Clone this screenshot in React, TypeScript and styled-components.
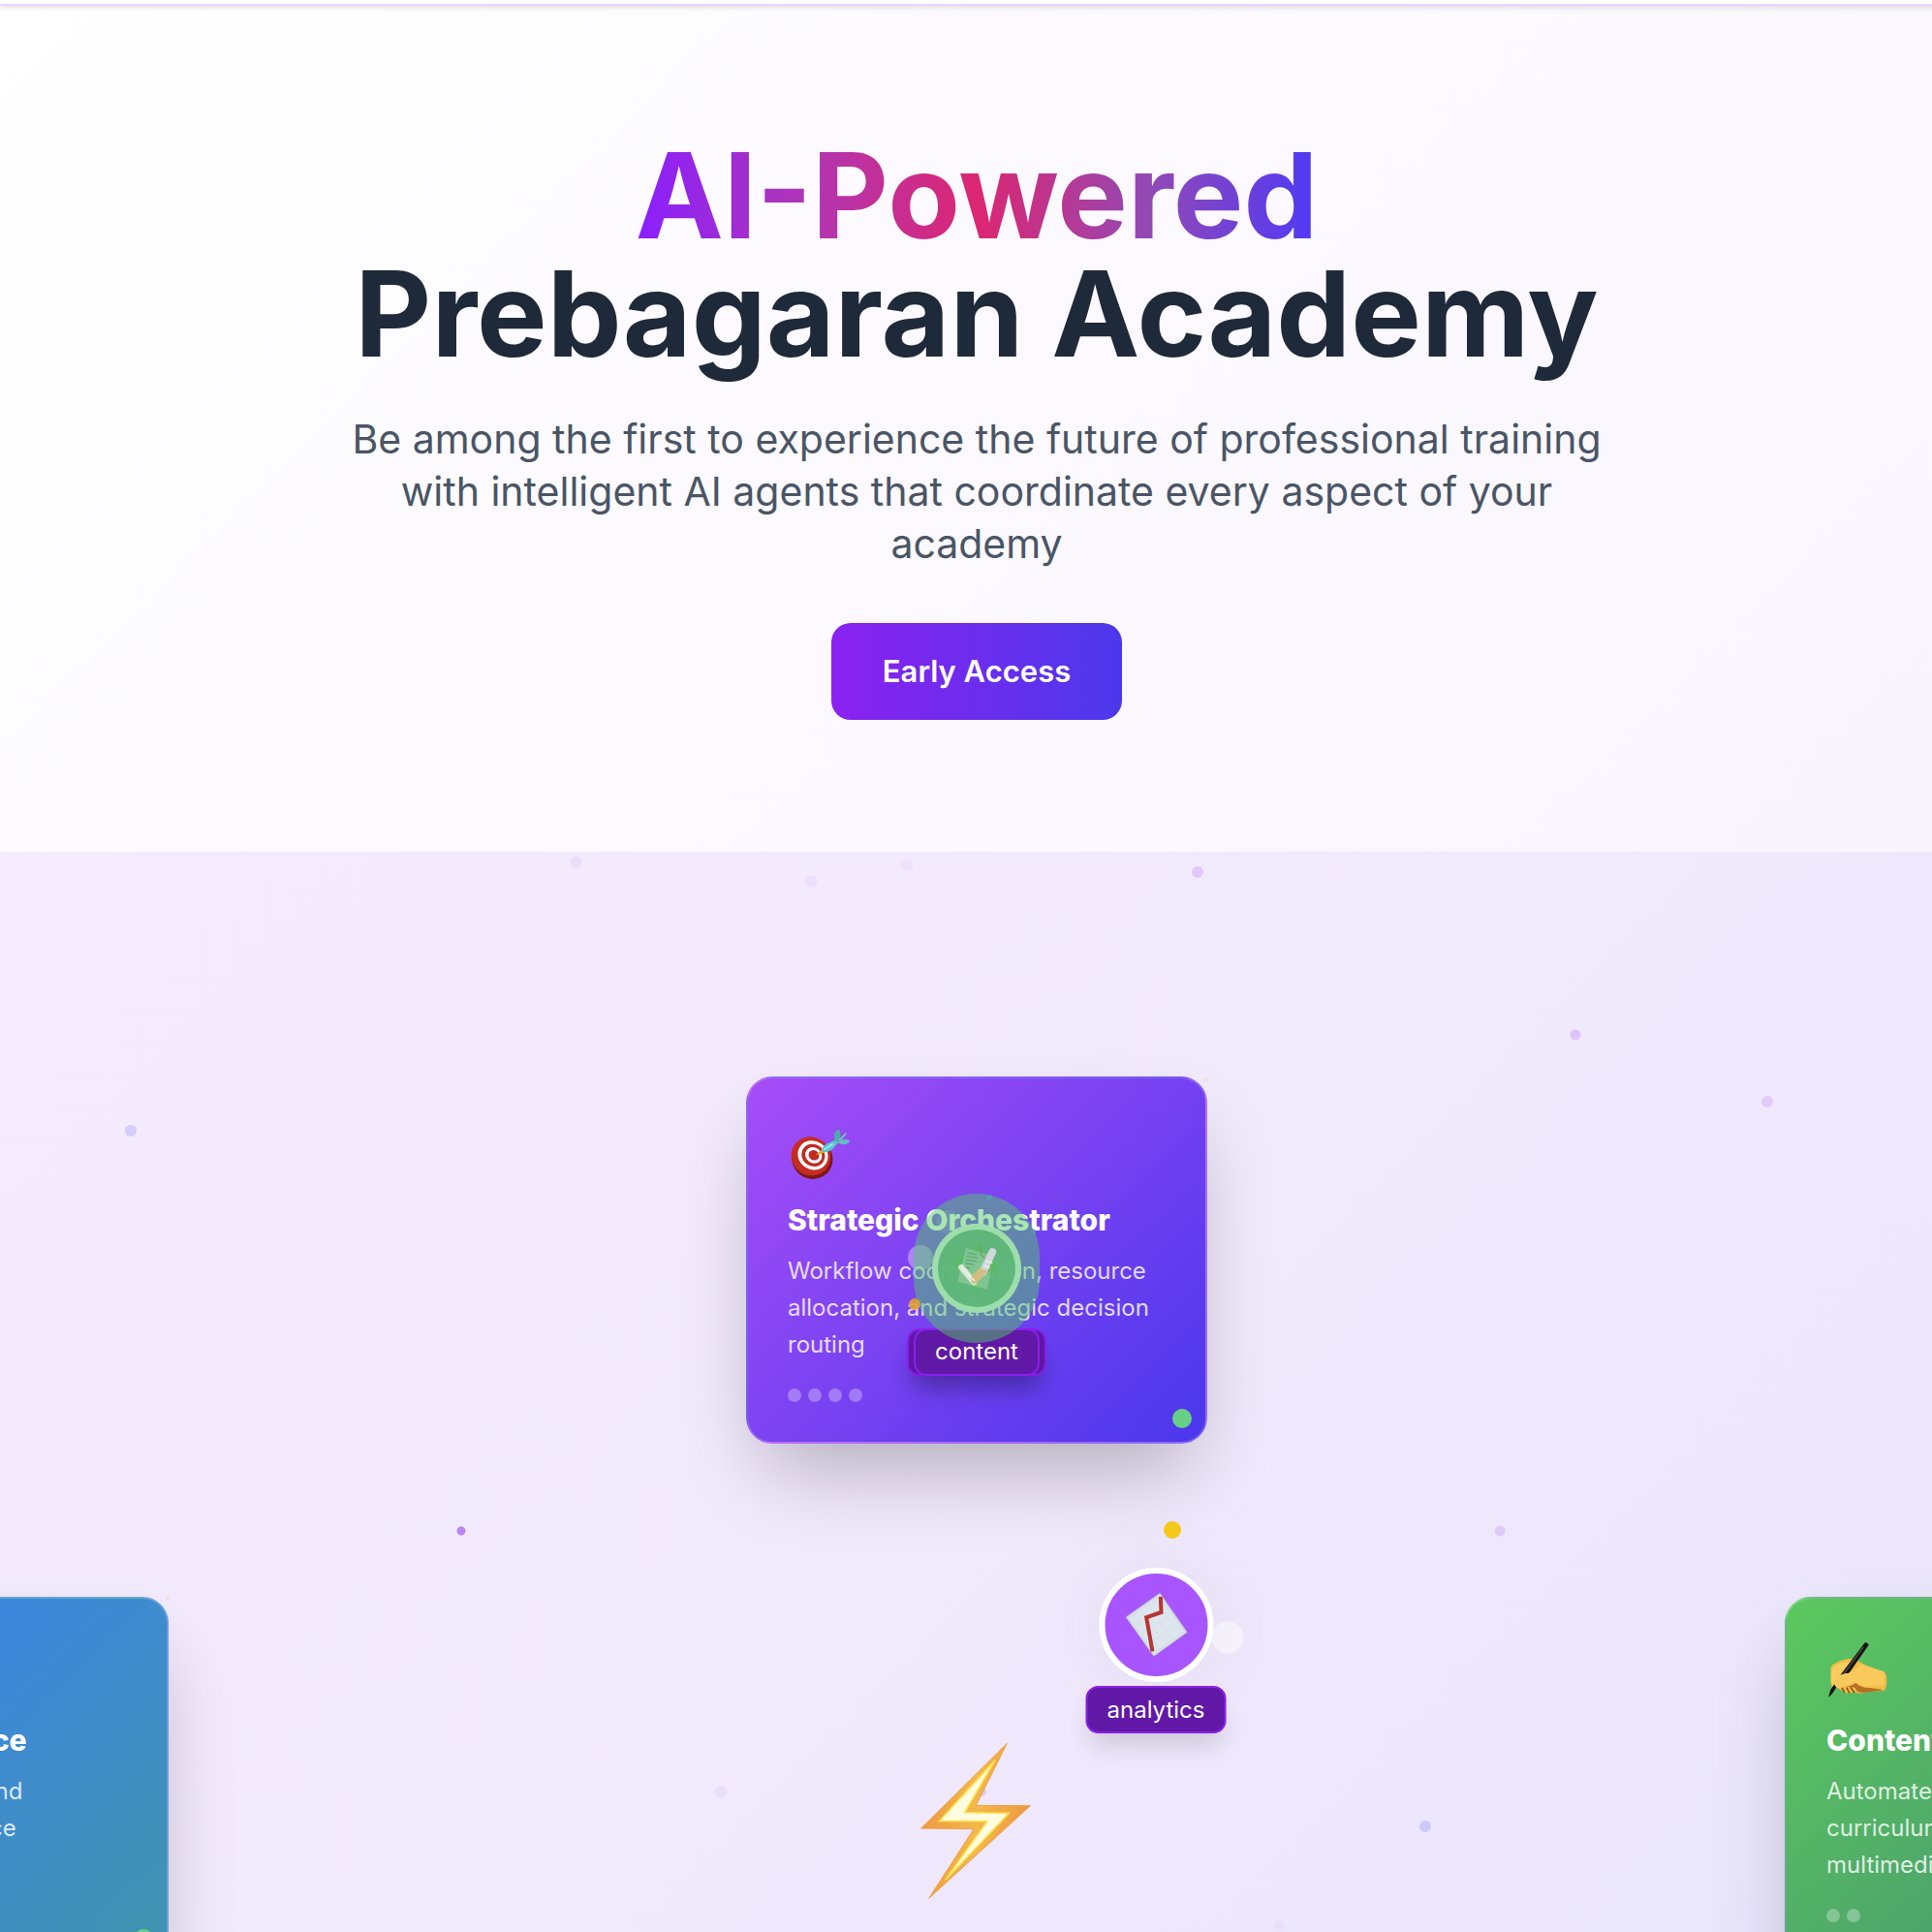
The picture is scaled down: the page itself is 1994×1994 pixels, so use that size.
import React from "react";
import styled, { createGlobalStyle } from "styled-components";

const GlobalStyle = createGlobalStyle`
  * { box-sizing: border-box; }
  body {
    margin: 0;
    overflow-x: hidden;
    background: #ffffff;
    font-family: Inter, "Liberation Sans", sans-serif;
  }
  h1, h2, p, ul { margin: 0; padding: 0; }
`;

const Page = styled.div`
  width: calc(100% + 22px);
  overflow: hidden;
`;

const TopBar = styled.header`
  position: relative;
  height: 6px;
  background: #ffffff;
  border-bottom: 2px solid #e9d5ff;
  box-shadow: 0 2px 5px rgba(0, 0, 0, 0.12);
`;

const Hero = styled.section`
  display: flex;
  flex-direction: column;
  align-items: center;
  padding: 135px 40px 136px;
  text-align: center;
  background: linear-gradient(135deg, #ffffff 0%, #fcfaff 40%, #f9f5ff 100%);
`;

const Headline = styled.h1`
  display: flex;
  flex-direction: column;
  align-items: center;
  font-size: 122px;
  line-height: 122px;
  font-weight: 700;
  color: #1e2939;
`;

const Accent = styled.span`
  background: linear-gradient(90deg, #8a1fff, #b036b4 25%, #dc2672 50%, #9349b4 75%, #4f39f6);
  background-clip: text;
  -webkit-background-clip: text;
  color: transparent;
`;

const Lead = styled.p`
  max-width: 1306px;
  margin-top: 41px;
  font-size: 41px;
  line-height: 54px;
  color: #4a5565;
`;

const EarlyButton = styled.button`
  margin-top: 55px;
  height: 100px;
  padding: 0 53px;
  border: 0;
  border-radius: 20px;
  background: linear-gradient(90deg, #8b21f0, #4c38ec);
  color: #ffffff;
  font: 600 31px/48px Inter, "Liberation Sans", sans-serif;
  cursor: pointer;
`;

const Canvas = styled.section`
  position: relative;
  height: 1115px;
  overflow: hidden;
  background: linear-gradient(135deg, #f4ebfe 0%, #f1e9fc 55%, #e8e5fc 100%);
`;

const Particle = styled.i<{ $x: number; $y: number; $size: number; $color: string }>`
  position: absolute;
  left: calc(50% + ${(p) => p.$x}px);
  top: ${(p) => p.$y}px;
  width: ${(p) => p.$size}px;
  height: ${(p) => p.$size}px;
  border-radius: 50%;
  transform: translate(-50%, -50%);
  background: ${(p) => p.$color};
`;

const Card = styled.article<{ $x: number; $y: number; $from: string; $to: string }>`
  position: absolute;
  left: calc(50% + ${(p) => p.$x}px);
  top: ${(p) => p.$y}px;
  width: 476px;
  min-height: 379px;
  margin-left: -238px;
  padding: 41px;
  border: 2px solid rgba(255, 255, 255, 0.2);
  border-radius: 27px;
  background: linear-gradient(135deg, ${(p) => p.$from}, ${(p) => p.$to});
  box-shadow: 0 42px 85px -20px rgba(0, 0, 0, 0.28);
  color: #ffffff;
`;

const CardIcon = styled.div`
  display: flex;
  align-items: center;
  height: 68px;
  margin-bottom: 13px;
`;

const CardTitle = styled.h2`
  font-size: 30px;
  line-height: 48px;
  font-weight: 800;
  white-space: nowrap;
`;

const CardText = styled.p`
  margin-top: 10px;
  font-size: 24px;
  line-height: 38px;
  color: rgba(255, 255, 255, 0.82);
`;

const DotRow = styled.div`
  display: flex;
  gap: 7px;
  margin-top: 26px;
`;

const Dot = styled.i`
  width: 14px;
  height: 14px;
  border-radius: 50%;
  background: rgba(255, 255, 255, 0.3);
`;

const Status = styled.i`
  position: absolute;
  right: 14px;
  bottom: 14px;
  width: 20px;
  height: 20px;
  border-radius: 50%;
  background: #66d184;
`;

const Token = styled.div<{ $x: number; $y: number }>`
  position: absolute;
  left: calc(50% + ${(p) => p.$x}px);
  top: ${(p) => p.$y}px;
  transform: translateX(-50%);
  display: flex;
  flex-direction: column;
  align-items: center;
`;

const Badge = styled.div`
  display: flex;
  align-items: center;
  justify-content: center;
  width: 118px;
  height: 118px;
  border: 6px solid #ffffff;
  border-radius: 50%;
  background: #a855ff;
  box-shadow: 0 0 85px rgba(0, 0, 0, 0.06);
`;

const Tag = styled.span<{ $width: number }>`
  display: flex;
  align-items: center;
  justify-content: center;
  width: ${(p) => p.$width}px;
  height: 49px;
  margin-top: 4px;
  border: 2px solid #8b1fee;
  border-radius: 13px;
  background: #6118a6;
  color: #ffffff;
  font-size: 24px;
  line-height: 34px;
  font-weight: 400;
  box-shadow: 0 17px 25px -5px rgba(0, 0, 0, 0.14);
`;

const TagStack = styled.div`
  position: absolute;
  left: calc(50% - 72px);
  top: 492px;
  width: 144px;
  height: 49px;
  display: flex;
  justify-content: center;
  border: 2px solid #8b1fee;
  border-radius: 13px;
  background: #6118a6;
  box-shadow: 0 17px 25px -5px rgba(0, 0, 0, 0.2);

  ${Tag} {
    margin-top: -2px;
    flex: none;
  }
`;

const Halo = styled.div`
  position: absolute;
  left: calc(50% - 65px);
  top: 353px;
  width: 130px;
  height: 154px;
  border-radius: 65px;
  background: rgba(80, 203, 102, 0.49);
`;

const RingBadge = styled.div`
  position: absolute;
  left: calc(50% - 46px);
  top: 384px;
  width: 92px;
  height: 92px;
  display: flex;
  align-items: center;
  justify-content: center;
  border: 6px solid rgba(168, 229, 180, 0.85);
  border-radius: 50%;
  background: rgba(94, 184, 120, 0.95);
`;

const TagText = styled.span`
  position: absolute;
  left: 50%;
  top: 499px;
  transform: translateX(-50%);
  color: #ffffff;
  font-size: 24px;
  line-height: 34px;
  font-weight: 400;
`;

const BoltHolder = styled.div`
  position: absolute;
  left: calc(50% - 78px);
  top: 901px;
  width: 160px;
  height: 200px;
`;

const TargetIcon = () => (
  <svg width="68" height="60" viewBox="0 -12 204 180" aria-hidden="true">
    <ellipse cx="76" cy="102" rx="64" ry="62" fill="#7d1714" transform="rotate(35 76 102)" />
    <ellipse cx="72" cy="94" rx="62" ry="59" fill="#c42c22" transform="rotate(35 72 94)" />
    <ellipse cx="78" cy="91" rx="48" ry="44" fill="#fff" transform="rotate(35 78 91)" />
    <ellipse cx="79" cy="91" rx="37" ry="34" fill="#bf2b22" transform="rotate(35 79 91)" />
    <ellipse cx="80" cy="91" rx="27" ry="24" fill="#fff" transform="rotate(35 80 91)" />
    <ellipse cx="81" cy="91" rx="17" ry="15" fill="#bf2b22" transform="rotate(35 81 91)" />
    <path d="M86 91L110 69L116 82Z" fill="#e2ad25" />
    <path d="M106 80Q104 64 120 56L146 44L157 51L139 72Q124 86 106 80Z" fill="#5cc5cd" />
    <path d="M145 47L144 25Q150 10 160 12Q168 28 157 50Z" fill="#4fa9ac" />
    <path d="M157 43L180 20L182 25L164 47Z" fill="#7fb9c3" />
    <path d="M153 50Q174 37 192 46Q189 59 167 58Z" fill="#63c0c2" />
    <path d="M112 74L140 56" stroke="#a2edf0" strokeWidth="5" />
  </svg>
);

const WritingIcon = () => (
  <svg width="68" height="64" viewBox="6 4 204 192" aria-hidden="true">
    <path d="M20 87Q30 68 79 60Q107 65 121 78L180 100Q193 103 193 127Q192 155 184 160Q154 161 137 164Q108 173 91 162L78 169L66 166L53 160L40 151L25 150Q17 146 20 87Z" fill="#f4bd48" />
    <path d="M22 93Q44 69 85 72L65 101Q43 111 38 131L28 147Q19 141 22 93Z" fill="#f9cd60" />
    <path d="M50 146Q80 150 97 136Q112 151 140 151L184 157Q150 163 137 164Q120 169 102 163L94 150L77 148Z" fill="#b66f22" />
    <path d="M54 151l8 14M68 150l10 18M80 149l13 16" stroke="#925015" strokeWidth="5" />
    <path d="M124 12Q132 7 137 18L78 103L47 133L24 170L12 180L19 157L46 116Z" fill="#171513" />
    <path d="M121 24L61 106" stroke="#514d4a" strokeWidth="4" />
    <path d="M34 127Q45 105 77 105L116 78Q149 94 185 101V144Q146 143 126 148Q109 142 94 133Q61 150 42 151Q24 145 34 127Z" fill="#f9ca5b" />
  </svg>
);

const ChartIcon = () => (
  <svg width="64" height="66" viewBox="0 0 192 198" aria-hidden="true">
    <path d="M107 1L191 122L88 196L2 75Z" fill="#d7dfe7" stroke="#b9b7ca" strokeWidth="3" />
    <path d="M107 12L180 121L91 183L14 78Z" fill="#dde6ee" />
    <path d="M24 64L108 181M45 48L129 168M67 33L151 152M88 19L171 136M33 98L127 31M53 126L147 60M72 155L168 90" stroke="#cbd5de" strokeWidth="1" />
    <path d="M109 12L111 60L65 76L84 181" fill="none" stroke="#b63632" strokeWidth="12" />
  </svg>
);

const DocIcon = () => (
  <svg width="50" height="54" viewBox="0 0 150 162" opacity="0.88" aria-hidden="true">
    <path d="M76 6L142 76L72 156L4 64Z" fill="#55be56" opacity=".7" />
    <path d="M42 18L126 42L108 146L16 122Z" fill="#8dc99b" opacity=".85" />
    <path d="M46 33l30 5M43 43l34 6M40 54l36 6M39 65l28 5M36 77l18 3" stroke="#559a6a" strokeWidth="3" />
    <path d="M84 10L88 38L120 72L112 92" fill="none" stroke="#7b9f55" strokeWidth="4" />
    <path d="M28 78L66 124" stroke="#e9eee7" strokeWidth="19" strokeLinecap="round" />
    <path d="M124 30L94 93" stroke="#e3dce9" strokeWidth="23" strokeLinecap="round" />
    <path d="M62 130L56 108L84 80L108 90L78 124Z" fill="#e4bd80" />
    <path d="M29 80l40 40M105 58l19 7M98 73l18 7" stroke="#fff" strokeWidth="4" />
  </svg>
);

const BoltIcon = () => (
  <svg width="160" height="200" viewBox="0 0 480 600" aria-hidden="true">
    <defs>
      <linearGradient id="boltEdge" x1="0" x2="1" y1="0" y2="0">
        <stop offset="0" stopColor="#ef9841" />
        <stop offset=".5" stopColor="#f3b84a" />
        <stop offset="1" stopColor="#ef9841" />
      </linearGradient>
    </defs>
    <path d="M328 58L232 250L400 251L86 538L225 323L62 321Z" fill="url(#boltEdge)" stroke="#efa047" strokeWidth="3" />
    <path d="M291 110L197 272L334 274L137 481L267 299L119 298Z" fill="#fffce0" stroke="#fae453" strokeWidth="5" />
  </svg>
);

const particles = [
  { x: -414, y: 11, size: 12, color: "#ebdcfc" },
  { x: -171, y: 31, size: 13, color: "#ecdffc" },
  { x: -72, y: 14, size: 13, color: "#eee2fc" },
  { x: 228, y: 21, size: 12, color: "#dfc8fb" },
  { x: 618, y: 189, size: 11, color: "#dec4fb" },
  { x: 816, y: 258, size: 12, color: "#e0cbfc" },
  { x: -873, y: 288, size: 12, color: "#d3cdfc" },
  { x: -532, y: 701, size: 9, color: "#bd83f7" },
  { x: 540, y: 701, size: 11, color: "#dfcafa" },
  { x: -264, y: 970, size: 13, color: "#eadffb" },
  { x: 463, y: 1006, size: 12, color: "#cdc8fb" },
  { x: 313, y: 1109, size: 12, color: "#e9e0fb" },
  { x: 5, y: 970, size: 10, color: "#dcc9fa" },
  { x: 236, y: 235, size: 4, color: "#f1e3d5" },
  { x: -835, y: 771, size: 4, color: "#f1e3d5" },
];

const agents = [
  {
    title: "Strategic Orchestrator",
    text: "Workflow coordination, resource allocation, and strategic decision routing",
    icon: <TargetIcon />,
    dots: 4,
    x: 0,
    y: 232,
    from: "#a64df7",
    to: "#4a37ec",
  },
  {
    title: "Market Intelligence",
    text: "Lead scoring, trends and competitor performance benchmarking",
    icon: null,
    dots: 3,
    x: -1072,
    y: 769,
    from: "#3b7ff8",
    to: "#4194ad",
  },
  {
    title: "Content Intelligence",
    text: "Automated course creation, curriculum development, and multimedia production",
    icon: <WritingIcon />,
    dots: 2,
    x: 1072,
    y: 769,
    from: "#5cc95f",
    to: "#438a74",
  },
];

export default function App() {
  return (
    <>
      <GlobalStyle />
      <Page>
        <TopBar />
        <main>
          <Hero>
            <Headline>
              <Accent>AI-Powered</Accent>
              <span>Prebagaran Academy</span>
            </Headline>
            <Lead>
              Be among the first to experience the future of professional training with intelligent AI
              agents that coordinate every aspect of your academy
            </Lead>
            <EarlyButton type="button">Early Access</EarlyButton>
          </Hero>
          <Canvas>
            {particles.map((p, i) => (
              <Particle key={i} $x={p.x} $y={p.y} $size={p.size} $color={p.color} />
            ))}
            {agents.map((a) => (
              <Card key={a.title} $x={a.x} $y={a.y} $from={a.from} $to={a.to}>
                <CardIcon>{a.icon}</CardIcon>
                <CardTitle>{a.title}</CardTitle>
                <CardText>{a.text}</CardText>
                <DotRow>
                  {Array.from({ length: a.dots }, (_, i) => (
                    <Dot key={i} />
                  ))}
                </DotRow>
                <Status />
              </Card>
            ))}
            <BoltHolder>
              <BoltIcon />
            </BoltHolder>
            <TagStack>
              <Tag $width={130} />
            </TagStack>
            <Particle $x={-58} $y={419} $size={26} $color="rgba(255,255,255,0.35)" />
            <Particle $x={-30} $y={382} $size={24} $color="rgba(255,255,255,0.12)" />
            <Halo />
            <RingBadge>
              <DocIcon />
            </RingBadge>
            <Particle $x={-64} $y={467} $size={12} $color="rgba(225,160,50,0.9)" />
            <Particle $x={13} $y={357} $size={6} $color="#5b9cab" />
            <Particle $x={58} $y={393} $size={6} $color="#5b90b4" />
            <TagText>content</TagText>
            <Particle $x={202} $y={700} $size={18} $color="#f4ca1c" />
            <Particle $x={259} $y={811} $size={33} $color="rgba(255,255,255,0.5)" />
            <Token $x={185} $y={739}>
              <Badge>
                <ChartIcon />
              </Badge>
              <Tag $width={145}>analytics</Tag>
            </Token>
          </Canvas>
        </main>
      </Page>
    </>
  );
}
